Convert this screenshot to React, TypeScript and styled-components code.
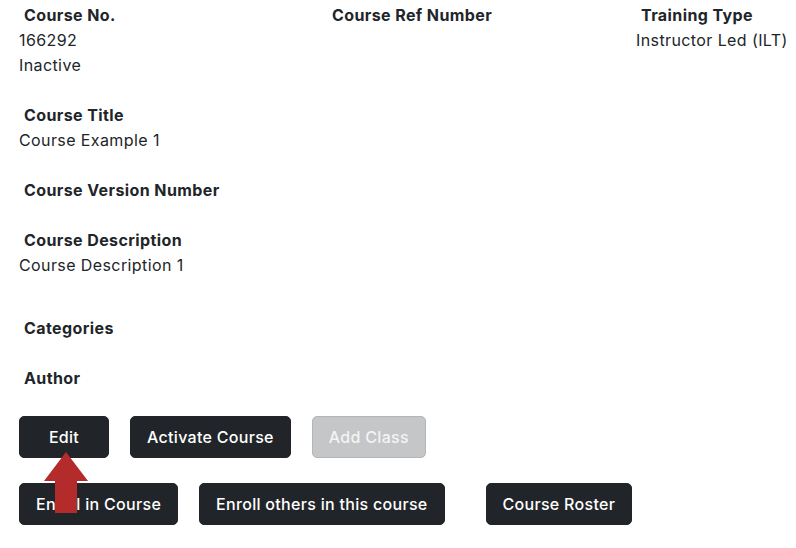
import styled, {createGlobalStyle} from 'styled-components'

const GlobalStyle = createGlobalStyle`
  html, body {
    margin: 0;
    padding: 0;
    background: #ffffff;
  }
  body {
    font-family: Inter, 'Noto Sans', sans-serif;
    font-size: 16px;
    letter-spacing: 0.4px;
    color: #212529;
  }
`

const Page = styled.div`
  position: relative;
  padding: 3px 0 0 19px;
`

const Grid = styled.div`
  display: grid;
  grid-template-columns: 308px 309px 160px;
`

const Field = styled.div<{$gap?: number}>`
  display: flex;
  flex-direction: column;
  margin-bottom: ${({$gap}) => $gap ?? 25}px;
`

const Label = styled.div`
  padding-left: 5px;
  font-weight: 700;
  line-height: 25px;
  color: #212529;
`

const Value = styled.div`
  line-height: 25px;
  color: #212529;
`

const Actions = styled.div`
  position: relative;
  display: flex;
  flex-direction: column;
  gap: 25px;
`

const ButtonRow = styled.div`
  display: flex;
  gap: 21px;
`

const Button = styled.button<{$minWidth?: number; $offset?: number}>`
  height: 42px;
  min-width: ${({$minWidth}) => $minWidth ?? 0}px;
  margin-left: ${({$offset}) => $offset ?? 0}px;
  padding: 0 16px;
  border: 1px solid #212529;
  border-radius: 5px;
  background: #212529;
  color: #ffffff;
  font-family: inherit;
  font-size: 16px;
  font-weight: 500;
  letter-spacing: 0.3px;
  cursor: pointer;

  &:disabled {
    background: #c5c6c8;
    border-color: #b4b5b7;
    color: #f4f4f4;
    cursor: default;
  }
`

const Arrow = styled.svg`
  position: absolute;
  left: 25px;
  top: 36px;
  width: 44px;
  height: 61px;
`

function PointerArrow() {
  return (
    <Arrow viewBox="0 0 44 61">
      <polygon points="22,0 44,29 33,29 33,61 11,61 11,29 0,29" fill="#b32b2b" />
    </Arrow>
  )
}

export default function App() {
  return (
    <>
      <GlobalStyle />
      <Page>
        <Grid>
          <Field>
            <Label>Course No.</Label>
            <Value>166292</Value>
            <Value>Inactive</Value>
          </Field>
          <Field>
            <Label>Course Ref Number</Label>
          </Field>
          <Field>
            <Label>Training Type</Label>
            <Value>Instructor Led (ILT)</Value>
          </Field>
        </Grid>
        <Field>
          <Label>Course Title</Label>
          <Value>Course Example 1</Value>
        </Field>
        <Field>
          <Label>Course Version Number</Label>
        </Field>
        <Field $gap={38}>
          <Label>Course Description</Label>
          <Value>Course Description 1</Value>
        </Field>
        <Field>
          <Label>Categories</Label>
        </Field>
        <Field>
          <Label>Author</Label>
        </Field>
        <Actions>
          <ButtonRow>
            <Button $minWidth={90}>Edit</Button>
            <Button>Activate Course</Button>
            <Button disabled>Add Class</Button>
          </ButtonRow>
          <ButtonRow>
            <Button>Enroll in Course</Button>
            <Button>Enroll others in this course</Button>
            <Button $offset={20}>Course Roster</Button>
          </ButtonRow>
          <PointerArrow />
        </Actions>
      </Page>
    </>
  )
}
